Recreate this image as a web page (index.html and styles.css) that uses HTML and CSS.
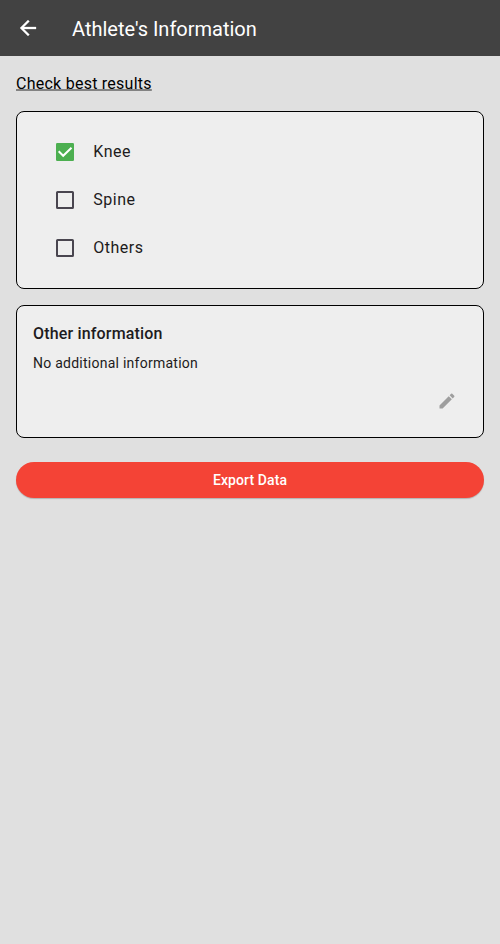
FILE: index.html
```html
<!DOCTYPE html>
<html lang="en">
<head>
<meta charset="utf-8">
<title>Athlete's Information</title>
<link rel="stylesheet" href="styles.css">
</head>
<body>
<header class="app-bar">
  <svg class="back" viewBox="0 0 24 24"><path d="M20 11H7.83l5.59-5.59L12 4l-8 8 8 8 1.41-1.41L7.83 13H20v-2z"/></svg>
  <h1 class="title">Athlete's Information</h1>
</header>
<main class="content">
  <a class="results-link">Check best results</a>
  <section class="card injuries">
    <div class="option"><svg class="check" viewBox="0 0 18 18"><rect class="box-on" width="18" height="18" rx="1.2"/><path class="tick" d="M2.7 8.3L7.2 12.8L15.5 4.7"/></svg><span class="label">Knee</span></div>
    <div class="option"><svg class="check" viewBox="0 0 18 18"><rect class="box-off" x="1" y="1" width="16" height="16" rx="0.6"/></svg><span class="label">Spine</span></div>
    <div class="option"><svg class="check" viewBox="0 0 18 18"><rect class="box-off" x="1" y="1" width="16" height="16" rx="0.6"/></svg><span class="label">Others</span></div>
  </section>
  <section class="card info">
    <h2 class="info-title">Other information</h2>
    <p class="info-text">No additional information</p>
    <svg class="edit" viewBox="0 0 24 24"><path d="M3 17.25V21h3.75L17.81 9.94l-3.75-3.75L3 17.25zM20.71 7.04a1 1 0 0 0 0-1.41l-2.34-2.34a1 1 0 0 0-1.41 0l-1.83 1.83 3.75 3.75 1.83-1.83z"/></svg>
  </section>
  <button class="export">Export Data</button>
</main>
</body>
</html>
```
FILE: styles.css
```css
* { box-sizing: border-box; }
body { margin: 0; min-height: 100vh; background: #e0e0e0; color: #1d1b20; font-family: Roboto, sans-serif; }
.app-bar { height: 56px; padding: 0 16px; display: flex; align-items: center; background: #424242; }
.back { width: 24px; height: 24px; fill: #fff; stroke: #fff; stroke-width: 0.3; }
.title { margin: 2px 0 0 32px; font-size: 20px; line-height: 24px; font-weight: 400; letter-spacing: 0; color: #fff; }
.content { padding: 16px; display: flex; flex-direction: column; }
.results-link { align-self: flex-start; height: 23px; line-height: 24px; font-size: 16px; letter-spacing: 0.25px; color: #000; text-decoration: underline 2px #838383; text-decoration-skip-ink: none; text-underline-offset: 0; }
.card { background: #eee; border: 1px solid #000; border-radius: 8px; }
.injuries { height: 178px; margin-top: 16px; padding: 16px 39px; }
.option { height: 48px; display: flex; align-items: center; gap: 19.3px; font-size: 16px; letter-spacing: 0.5px; }
.label { line-height: 24px; }
.check { width: 18px; height: 18px; }
.box-on { fill: #4caf50; }
.tick { fill: none; stroke: #fff; stroke-width: 2; }
.box-off { fill: none; stroke: #49454f; stroke-width: 2; }
.info { height: 133px; margin-top: 16px; padding: 16px; display: flex; flex-direction: column; }
.info-title { margin: 0; font-size: 16px; line-height: 24px; font-weight: 500; letter-spacing: 0.17px; }
.info-text { margin: 7px 0 0; font-size: 14px; line-height: 20px; letter-spacing: 0.25px; }
.edit { width: 20px; height: 20px; margin: 18px 10px 0 0; align-self: flex-end; fill: #9e9e9e; }
.export { height: 36px; margin-top: 24px; border: 0; border-radius: 18px; background: #f44336; color: #fff; font: 500 14px Roboto, sans-serif; letter-spacing: 0.1px; box-shadow: 0 1px 1px rgba(0,0,0,.2); }
```
